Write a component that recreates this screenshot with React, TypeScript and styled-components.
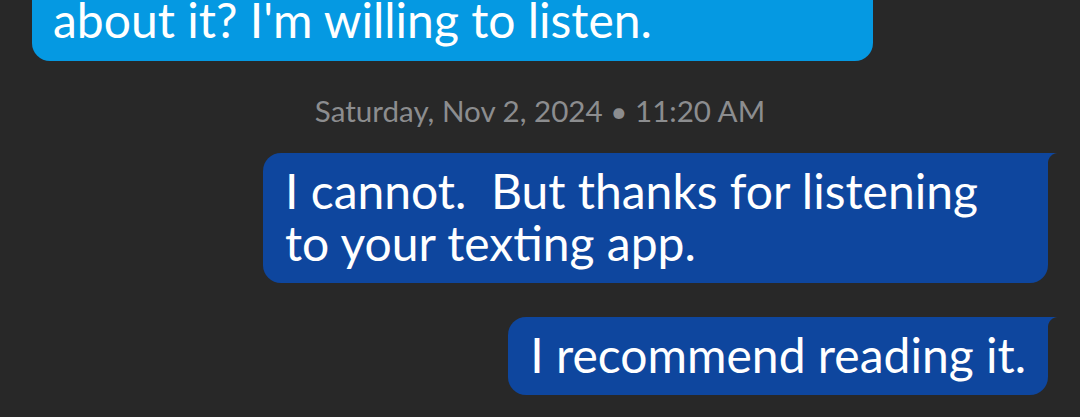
import React from "react";
import styled, { createGlobalStyle } from "styled-components";

const Global = createGlobalStyle`
  html, body { margin: 0; padding: 0; background: #282828; }
  body { font-family: "Lato", "Noto Sans", sans-serif; overflow: hidden; }
`;

const Thread = styled.div`
  display: flex;
  flex-direction: column;
  padding: 0 32px;
  height: 417px;
  overflow: hidden;
`;

const Bubble = styled.div<{ $out?: boolean; $wrapped?: boolean }>`
  position: relative;
  align-self: ${(p) => (p.$out ? "flex-end" : "flex-start")};
  width: ${(p) => (p.$wrapped ? "785px" : "auto")};
  max-width: 785px;
  box-sizing: border-box;
  padding: 12px 22px 14px 22px;
  border-radius: 18px;
  ${(p) => (p.$out ? "border-top-right-radius: 0;" : "")}
  background: ${(p) => (p.$out ? "#0E469E" : "#0599E2")};
  color: #ffffff;
  font-size: 48px;
  line-height: 52px;
  white-space: pre-wrap;

  ${(p) =>
    p.$out
      ? `&::after {
    content: "";
    position: absolute;
    top: 0;
    right: -10px;
    width: 10px;
    height: 10px;
    background: radial-gradient(circle at 100% 100%, transparent 9.5px, #0E469E 10.5px);
  }`
      : ""}
`;

const TopBubble = styled(Bubble)`
  padding: 0 22px 21px 21px;
  line-height: 40px;
  border-top-left-radius: 0;
  border-top-right-radius: 0;
  width: 841px;
  max-width: none;
`;

const Stamp = styled.div`
  align-self: center;
  margin: 30px 0 22px;
  color: #8c8d8f;
  font-size: 29.6px;
  line-height: 40px;
`;

const Gap = styled.div`
  height: 34px;
  flex: none;
`;

export default function App() {
  return (
    <>
      <Global />
      <Thread>
        <TopBubble>about it? I'm willing to listen.</TopBubble>
        <Stamp>Saturday, Nov 2, 2024 • 11:20 AM</Stamp>
        <Bubble $out $wrapped>{"I cannot.  But thanks for listening\nto your texting app."}</Bubble>
        <Gap />
        <Bubble $out>I recommend reading it.</Bubble>
      </Thread>
    </>
  );
}
